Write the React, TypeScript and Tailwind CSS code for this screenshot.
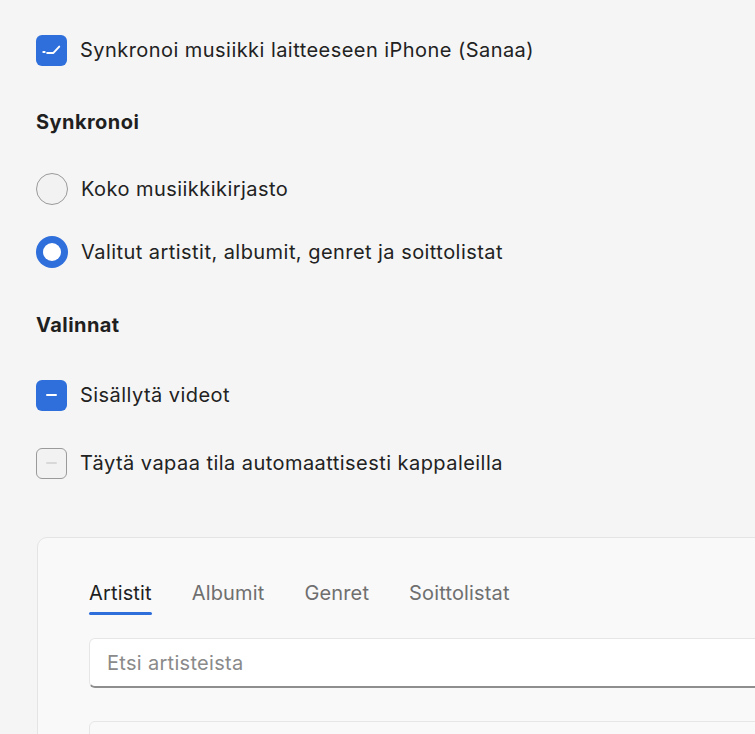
import React from 'react'

function CheckMark() {
  return (
    <svg viewBox="0 0 32 32" className="w-full h-full">
      <path d="M7.5 17.5h1.5" stroke="white" strokeWidth="2" strokeLinecap="round" fill="none" />
      <path d="M11.5 18.5h6.5l6-6.5" stroke="white" strokeWidth="2" strokeLinecap="round" strokeLinejoin="round" fill="none" />
    </svg>
  )
}

function Box({ state }: { state: 'checked' | 'mixed' | 'off' }) {
  if (state === 'off') {
    return (
      <div className="w-[31px] h-[31px] rounded-[6px] border-[1.5px] border-[#9a9a9a] bg-[#f2f2f2] flex items-center justify-center shrink-0">
        <div className="w-[11px] h-[2px] rounded-full bg-[#d8d8d8]" />
      </div>
    )
  }
  return (
    <div className="w-[31px] h-[31px] rounded-[6px] bg-[#2e6fdc] flex items-center justify-center shrink-0">
      {state === 'checked' ? <CheckMark /> : <div className="w-[11px] h-[2px] rounded-full bg-white" />}
    </div>
  )
}

function Radio({ on }: { on?: boolean }) {
  if (on) {
    return (
      <div className="w-[32px] h-[32px] rounded-full bg-[#2e6fdc] flex items-center justify-center shrink-0">
        <div className="w-[18px] h-[18px] rounded-full bg-white" />
      </div>
    )
  }
  return <div className="w-[32px] h-[32px] rounded-full border-[1.5px] border-[#9a9a9a] bg-[#f2f2f2] shrink-0" />
}

function Row({ control, label }: { control: React.ReactNode; label: string }) {
  return (
    <div className="flex items-center gap-[13px] h-[32px]">
      {control}
      <span className="text-[20px] leading-[28px] text-[#222]">{label}</span>
    </div>
  )
}

export default function App() {
  const tabs = ['Artistit', 'Albumit', 'Genret', 'Soittolistat']
  return (
    <div
      className="w-[755px] h-[734px] overflow-hidden bg-[#f5f5f5] pl-[36px] pt-[34px] tracking-[0.45px]"
      style={{ fontFamily: 'Inter, "Liberation Sans", sans-serif' }}
    >
      <Row control={<Box state="checked" />} label="Synkronoi musiikki laitteeseen iPhone (Sanaa)" />

      <h2 className="mt-[42px] text-[20px] leading-[28px] font-bold text-[#1f1f1f]">Synkronoi</h2>
      <div className="mt-[37px]">
        <Row control={<Radio />} label="Koko musiikkikirjasto" />
      </div>
      <div className="mt-[31px]">
        <Row control={<Radio on />} label="Valitut artistit, albumit, genret ja soittolistat" />
      </div>

      <h2 className="mt-[43px] text-[20px] leading-[28px] font-bold text-[#1f1f1f]">Valinnat</h2>
      <div className="mt-[40px]">
        <Row control={<Box state="mixed" />} label="Sisällytä videot" />
      </div>
      <div className="mt-[36px]">
        <Row control={<Box state="off" />} label="Täytä vapaa tila automaattisesti kappaleilla" />
      </div>

      <div className="mt-[58px] ml-px w-[800px] h-[300px] rounded-[10px] border border-[#e4e4e4] bg-[#f9f9f9] pl-[51px] pt-[43px]">
        <div className="flex gap-[40px] tracking-[0.15px]">
          {tabs.map((t, i) => (
            <div key={t} className="flex flex-col">
              <span className={`text-[20px] leading-[24px] ${i === 0 ? 'text-[#1f1f1f]' : 'text-[#6f6f6f]'}`}>{t}</span>
              <div className={`mt-[7px] h-[3px] rounded-full ${i === 0 ? 'bg-[#2e6fdc]' : 'bg-transparent'}`} />
            </div>
          ))}
        </div>
        <div className="mt-[23px] h-[50px] rounded-[6px] bg-white border border-[#e6e6e6] border-b-[2px] border-b-[#8e8e8e] flex items-center pl-[17px]">
          <span className="text-[20px] text-[#8a8a8a] tracking-[0.3px]">Etsi artisteista</span>
        </div>
        <div className="mt-[33px] h-[100px] rounded-[6px] bg-[#f9f9f9] border border-[#e6e6e6]" />
      </div>
    </div>
  )
}
